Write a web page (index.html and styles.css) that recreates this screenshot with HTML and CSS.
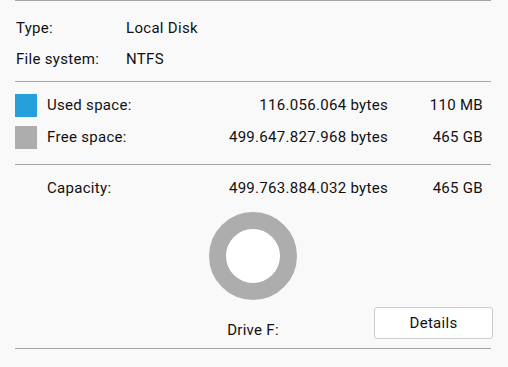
FILE: index.html
```html
<!DOCTYPE html>
<html lang="en">
<head>
    <meta charset="UTF-8">
    <title>Drive F: Properties</title>
    <link rel="stylesheet" href="styles.css">
</head>
<body>
    <div class="panel">
        <div class="rule"></div>

        <div class="info">
            <div class="info-row"><span>Type:</span><span>Local Disk</span></div>
            <div class="info-row"><span>File system:</span><span>NTFS</span></div>
        </div>

        <div class="rule"></div>

        <div class="space">
            <div class="space-row">
                <span class="swatch used"></span>
                <span>Used space:</span>
                <span class="bytes">116.056.064 bytes</span>
                <span class="unit">110 MB</span>
            </div>
            <div class="space-row">
                <span class="swatch free"></span>
                <span>Free space:</span>
                <span class="bytes">499.647.827.968 bytes</span>
                <span class="unit">465 GB</span>
            </div>
        </div>

        <div class="rule"></div>

        <div class="space capacity">
            <div class="space-row">
                <span></span>
                <span>Capacity:</span>
                <span class="bytes">499.763.884.032 bytes</span>
                <span class="unit">465 GB</span>
            </div>
        </div>

        <div class="chart">
            <div class="donut"></div>
        </div>

        <div class="footer">
            <span class="drive">Drive F:</span>
            <button class="details">Details</button>
        </div>

        <div class="rule bottom"></div>
    </div>
</body>
</html>
```

FILE: styles.css
```css
body {
    margin: 0;
    background-color: #f9f9f9;
    font-family: Roboto, "Liberation Sans", sans-serif;
    font-size: 15px;
    letter-spacing: 0.3px;
    color: #111111;
}
.panel {
    width: 476px;
    margin-left: 15px;
}
.rule {
    height: 1px;
    background-color: #a5a5a5;
}
.info {
    padding: 11px 0 7px 1px;
}
.info-row {
    display: grid;
    grid-template-columns: 110px 1fr;
    height: 31px;
    align-items: center;
}
.space {
    padding: 7px 8px 11px 0;
}
.space-row {
    display: grid;
    grid-template-columns: 22px 1fr auto 85px;
    column-gap: 10px;
    height: 32px;
    align-items: center;
}
.bytes,
.unit {
    text-align: right;
}
.swatch {
    width: 22px;
    height: 23px;
}
.used {
    background-color: #26a0da;
}
.free {
    background-color: #adadad;
}
.capacity {
    padding: 7px 8px 0 0;
}
.chart {
    display: flex;
    justify-content: center;
    padding-top: 8px;
}
.donut {
    width: 54px;
    height: 54px;
    border: 17px solid #adadad;
    border-radius: 50%;
    background-color: #ffffff;
}
.footer {
    display: grid;
    grid-template-columns: 1fr auto 1fr;
    margin-top: 7px;
    margin-bottom: 9px;
}
.drive {
    grid-column: 2;
    align-self: end;
    line-height: 18px;
}
.details {
    grid-column: 3;
    justify-self: end;
    width: 119px;
    height: 32px;
    margin-right: -2px;
    padding-bottom: 2px;
    background-color: #ffffff;
    border: 1px solid #cccccc;
    border-radius: 3px;
    font-family: inherit;
    font-size: 15px;
    letter-spacing: 0.3px;
    color: #111111;
}
```
